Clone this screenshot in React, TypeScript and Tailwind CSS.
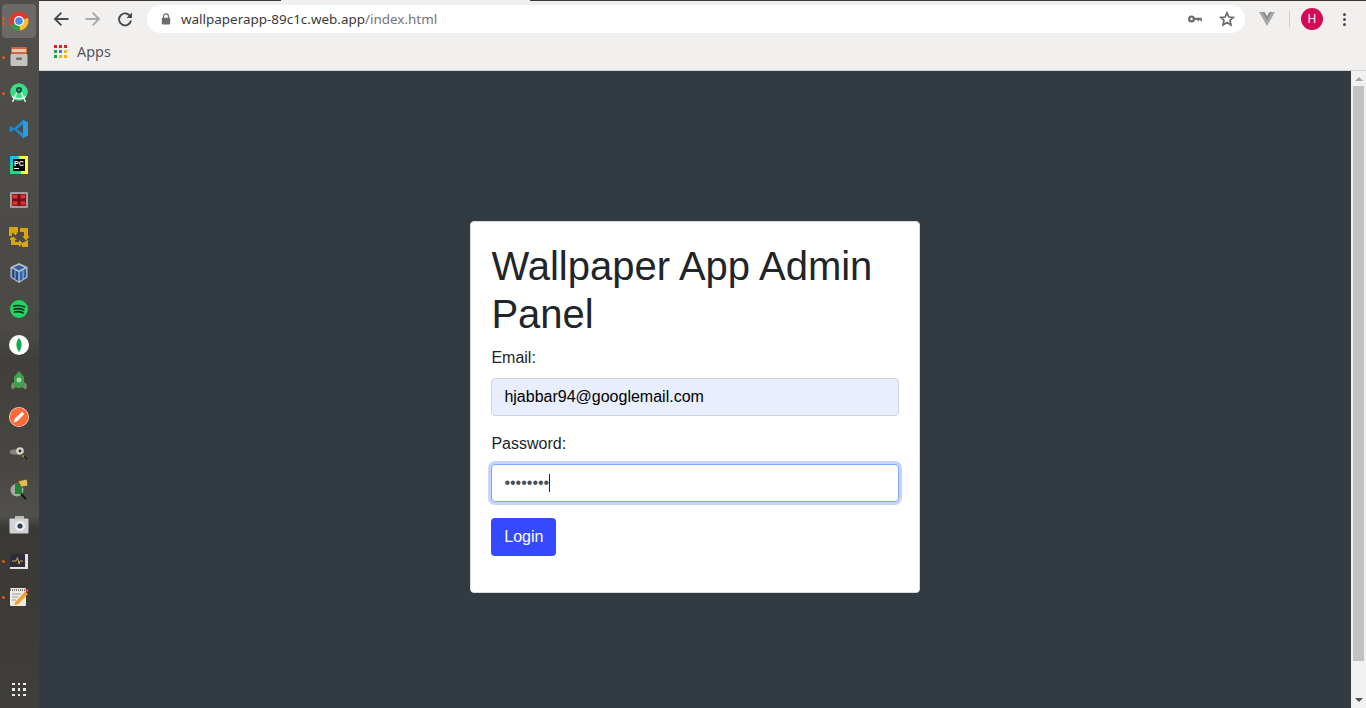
// App.tsx
import React from "react";

const Dock: React.FC<{ dots?: number; children: React.ReactNode; active?: boolean }> = ({ dots = 0, children, active }) => {
  return (
    <div className="relative flex h-[36px] w-[39px] items-center justify-center pr-[1px]">
      {active && <div className="absolute left-[2px] top-[1px] h-[34px] w-[34px] rounded-[4px] bg-[#6b6a67]" />}
      {dots > 0 && (
        <div className="absolute left-[2px] top-0 flex h-full flex-col justify-center gap-[2px]">
          {Array.from({ length: dots }).map((_, i) => (
            <span key={i} className="h-[3px] w-[3px] rounded-full bg-[#e9541f]" />
          ))}
        </div>
      )}
      <div className="relative h-[20px] w-[20px]">{children}</div>
    </div>
  );
};

const icon = "block h-[20px] w-[20px] overflow-visible";

const Sidebar = () => (
  <div className="flex h-[708px] w-[39px] shrink-0 flex-col bg-[linear-gradient(180deg,#4f4e4a_0px,#4a4946_330px,#403f3b_360px,#484743_470px,#51504d_515px,#3a3936_528px,#3f3e3b_708px)] pt-[3px]">
    <Dock dots={2} active>
      <svg viewBox="0 0 20 20" className={icon}>
        <circle cx="10" cy="10" r="9.5" fill="#e0392e" />
        <path d="M10 10 L1.8 14.8 A9.5 9.5 0 0 0 11 19.4 Z" fill="#2f9e47" />
        <path d="M10 10 L19 7 A9.5 9.5 0 0 1 11 19.4 Z" fill="#f7c32d" />
        <circle cx="10" cy="10" r="5" fill="#fff" />
        <circle cx="10" cy="10" r="3.8" fill="#4a8af0" />
      </svg>
    </Dock>
    <Dock dots={1}>
      <svg viewBox="0 0 20 20" className={icon}>
        <rect x="2" y="0" width="16" height="9" rx="1" fill="#c9674a" />
        <rect x="3" y="2" width="14" height="3" fill="#f2c9a0" />
        <rect x="1.5" y="7" width="17" height="12" rx="1.5" fill="#c4c3bf" />
        <rect x="7" y="10.5" width="6" height="2.5" rx="1" fill="#6e6d70" />
      </svg>
    </Dock>
    <Dock dots={1}>
      <svg viewBox="0 0 20 20" className={icon}>
        <circle cx="10" cy="9" r="8.8" fill="#3ddc84" />
        <path d="M3.5 19 L9 7 M16.5 19 L11 7 M3 13.5 Q10 18 17 13.5" stroke="#e8f3ec" strokeWidth="1.4" fill="none" />
        <circle cx="10" cy="7" r="3" fill="#0f4b3d" />
        <circle cx="10" cy="7" r="1" fill="#3ddc84" />
      </svg>
    </Dock>
    <Dock>
      <svg viewBox="0 0 20 20" className={icon}>
        <path d="M14 1 L19 3.4 V16.6 L14 19 L5 10.5 L2 13 L0.5 12 V8 L2 7 L5 9.5 Z" fill="#1f8ad2" />
        <path d="M14 5.5 L8 10 L14 14.5 Z" fill="#4a4946" />
        <path d="M14 1 L19 3.4 V16.6 L14 19 Z" fill="#2a9ce4" />
      </svg>
    </Dock>
    <Dock>
      <svg viewBox="0 0 20 20" className={icon}>
        <rect x="1" y="1" width="18" height="18" fill="#21d789" />
        <path d="M10 1 H19 V19 H12 Z" fill="#fcf84a" />
        <path d="M1 1 H8 L1 10 Z" fill="#07c3f2" />
        <rect x="4" y="4" width="12" height="12" fill="#000" />
        <text x="5" y="11" fontSize="7" fontWeight="700" fill="#fff" fontFamily="Liberation Sans, sans-serif">PC</text>
        <rect x="5" y="13" width="5" height="1" fill="#fff" />
      </svg>
    </Dock>
    <Dock>
      <svg viewBox="0 0 20 20" className={icon}>
        <rect x="1" y="1" width="18" height="16" rx="1" fill="#a09f9c" />
        <rect x="3" y="3" width="14" height="12" fill="#a3171d" />
        <path d="M10 3 V15 M3 9 H17" stroke="#4d1014" strokeWidth="1.2" />
        <rect x="4" y="4" width="4" height="3" fill="#d8343a" />
        <rect x="12" y="4" width="4" height="3" fill="#d8343a" />
        <rect x="4" y="10.5" width="4" height="3" fill="#d8343a" />
        <rect x="12" y="10.5" width="4" height="3" fill="#d8343a" />
      </svg>
    </Dock>
    <Dock>
      <svg viewBox="0 0 20 20" className={icon}>
        <path d="M0 0 H9 V5 L6.5 8.5 L4 6 H3 V9 H0 Z M11 1 H19 V9 L20.5 9.5 L17 13.5 L13.5 9.5 L15 9 V5 H11 Z M1 11 L4.5 9.5 L8 13 H6 V15 H10 V13 L14 16.5 L10 20 V18 H2 V13 H1 Z M13 16 L19 13 V20 H13 Z" fill="#dba30c" />
      </svg>
    </Dock>
    <Dock>
      <svg viewBox="0 0 20 20" className={icon}>
        <path d="M10 0 L18.5 4 V14.5 L10 20 L1.5 14.5 V4 Z" fill="#b9c0cb" />
        <path d="M2.8 5.5 L9.3 9 V18.2 L2.8 14 Z" fill="#1f4c8f" />
        <path d="M17.2 5.5 L10.7 9 V18.2 L17.2 14 Z" fill="#2f62ad" />
        <path d="M10 2 L15.8 4.6 L10 7.6 L4.2 4.6 Z" fill="#33639f" />
        <path d="M6 7.5 V16 M14 7.5 V16" stroke="#c9d0da" strokeWidth="0.8" />
      </svg>
    </Dock>
    <Dock>
      <svg viewBox="0 0 20 20" className={icon}>
        <circle cx="10" cy="10" r="9" fill="#1ed760" />
        <path d="M4.5 7.2 Q10 5.4 15.5 8 M5 10.2 Q10 8.8 14.8 11 M5.6 13 Q10 11.9 14 13.8" stroke="#14261a" strokeWidth="1.6" fill="none" strokeLinecap="round" />
      </svg>
    </Dock>
    <Dock>
      <svg viewBox="0 0 20 20" className={icon}>
        <circle cx="10" cy="10" r="10" fill="#fff" />
        <path d="M10 3 C13.5 7 13.5 12 10 17 C6.5 12 6.5 7 10 3 Z" fill="#13aa52" />
      </svg>
    </Dock>
    <Dock>
      <svg viewBox="0 0 20 20" className={icon}>
        <path d="M4 11 Q0.5 15 3.5 18.5 L7 16 Z M16 11 Q19.5 15 16.5 18.5 L13 16 Z" fill="#7d8a6c" />
        <path d="M10 0 L15 6 V13 L12 17 H8 L5 13 V6 Z" fill="#3fa34d" />
        <circle cx="10" cy="9" r="2.4" fill="#a5dbae" />
      </svg>
    </Dock>
    <Dock>
      <svg viewBox="0 0 20 20" className={icon}>
        <circle cx="10" cy="10" r="10" fill="#f3d9cc" />
        <circle cx="10" cy="10" r="9.2" fill="#ff6a3a" />
        <path d="M4.5 15.5 L6 11.5 L13 4.8 L15.2 7 L8.5 14 Z" fill="#fff" />
      </svg>
    </Dock>
    <Dock>
      <svg viewBox="0 0 20 20" className={icon}>
        <ellipse cx="6" cy="9" rx="5.5" ry="2.8" fill="#85847d" />
        <circle cx="11" cy="8" r="3.8" fill="#d6d3c9" />
        <circle cx="11" cy="8" r="1.4" fill="#2d2b28" />
        <path d="M13 11 L18 16" stroke="#201f1c" strokeWidth="1.6" />
        <circle cx="14" cy="13" r="1.2" fill="#b9802c" />
      </svg>
    </Dock>
    <Dock>
      <svg viewBox="0 0 20 20" className={icon}>
        <circle cx="8" cy="11" r="6.5" fill="#a9a8a3" />
        <rect x="6" y="5" width="7" height="10" fill="#1c8a33" />
        <path d="M9 2 L18 0 L19 7 L12 8 Z" fill="#e2bb5c" stroke="#5a4515" strokeWidth="0.8" />
        <path d="M12 15 L17 20" stroke="#151513" strokeWidth="2" />
      </svg>
    </Dock>
    <Dock>
      <svg viewBox="0 0 20 20" className={icon}>
        <rect x="0.5" y="3.5" width="19" height="15" rx="1" fill="#d3d3d6" />
        <rect x="6" y="1" width="9" height="3" fill="#bcbcbf" />
        <circle cx="11" cy="11" r="5" fill="#efeff0" />
        <circle cx="11" cy="11" r="2.6" fill="#33415f" />
      </svg>
    </Dock>
    <Dock dots={1}>
      <svg viewBox="0 0 20 20" className={icon}>
        <rect x="1" y="3" width="18" height="15" fill="#e2e2e2" />
        <rect x="1" y="3" width="15" height="13" rx="0.5" fill="#2e2c3c" />
        <path d="M3 10 H7 L8.5 6.5 L10 13 L11 10 H14" stroke="#d7b15a" strokeWidth="0.9" fill="none" />
      </svg>
    </Dock>
    <Dock dots={1}>
      <svg viewBox="0 0 20 20" className={icon}>
        <rect x="1" y="1" width="16" height="18" rx="1" fill="#ecebe7" />
        <path d="M1 3 H17" stroke="#77766f" strokeWidth="2" strokeDasharray="1 1" />
        <path d="M3 7 H12 M3 10 H9 M3 13 H7" stroke="#9a9994" strokeWidth="1" />
        <path d="M6 15.5 L16 4.5 L19 7 L9 17.5 L5.5 18 Z" fill="#f0a02c" />
        <circle cx="18" cy="3.5" r="1.6" fill="#e2394b" />
      </svg>
    </Dock>
    <div className="flex flex-1 items-end justify-center pb-[12px] pr-[1px]">
      <div className="grid grid-cols-3 gap-[3px]">
        {Array.from({ length: 9 }).map((_, i) => (
          <span key={i} className="h-[2.5px] w-[2.5px] bg-[#eeeeec]" />
        ))}
      </div>
    </div>
  </div>
);

const TopStrip = () => (
  <div className="flex h-[1px] bg-[#3a3833]">
    <div className="ml-[242px] w-[249px] bg-[#f1f0ee]" />
  </div>
);

const Toolbar = () => (
  <div className="flex h-[35px] items-center bg-[#f1f0ee] pt-[1px]">
    <div className="flex w-[108px] shrink-0 items-center pl-[14px]">
      <svg viewBox="0 0 16 16" className="h-[16px] w-[16px]" fill="none" stroke="#4a4a4c" strokeWidth="1.9">
        <path d="M15.5 8 H2 M8.4 1.6 L2 8 L8.4 14.4" />
      </svg>
      <svg viewBox="0 0 16 16" className="ml-[16px] h-[16px] w-[16px]" fill="none" stroke="#a9a9a9" strokeWidth="1.9">
        <path d="M0.5 8 H14 M7.6 1.6 L14 8 L7.6 14.4" />
      </svg>
      <svg viewBox="0 0 16 16" className="ml-[16px] h-[16px] w-[16px]" fill="none">
        <path d="M13.6 6 A6 6 0 1 0 14 9.4" stroke="#4a4a4c" strokeWidth="1.9" />
        <path d="M15 1.5 V7 H9.5 Z" fill="#4a4a4c" />
      </svg>
    </div>
    <div className="flex h-[28px] w-[1098px] shrink-0 items-center rounded-full bg-white pl-[14px] pr-[10px]">
      <svg viewBox="0 0 10 12" className="h-[12px] w-[10px]">
        <path d="M2.5 5 V3.4 A2.5 2.5 0 0 1 7.5 3.4 V5" stroke="#6d6d6f" strokeWidth="1.2" fill="none" />
        <rect x="0.8" y="4.8" width="8.4" height="6.6" rx="0.8" fill="#6d6d6f" />
      </svg>
      <span className="ml-[10px] text-[13.45px] text-[#3a3a3c] [font-family:'Noto_Sans',sans-serif]">
        wallpaperapp-89c1c.web.app<span className="text-[#747476]">/index.html</span>
      </span>
      <div className="ml-auto flex items-center">
        <svg viewBox="0 0 16 8" className="h-[8px] w-[14px]">
          <circle cx="4" cy="4" r="2.7" stroke="#6e6e70" strokeWidth="2.6" fill="none" />
          <path d="M7 2.6 H15.8 V6.6 H14.2 V5.2 H12.6 V6.6 H11 V5.2 H7 Z" fill="#6e6e70" />
        </svg>
        <svg viewBox="0 0 16 16" className="ml-[17px] h-[16px] w-[16px]" fill="none" stroke="#6a6a6c" strokeWidth="1.7">
          <path d="M8 1.8 L9.9 6 L14.4 6.4 L11 9.4 L12 13.9 L8 11.5 L4 13.9 L5 9.4 L1.6 6.4 L6.1 6 Z" />
        </svg>
      </div>
    </div>
    <svg viewBox="0 0 16 14" className="ml-[14px] h-[14px] w-[16px]">
      <path d="M0 0 H5.5 L8 4.5 L10.5 0 H16 L8 14 Z" fill="#a7a7a7" />
      <path d="M3.2 0 H5.5 L8 4.5 L10.5 0 H12.8 L8 8.4 Z" fill="#8c8c8c" />
    </svg>
    <div className="ml-[14px] h-[16px] w-px bg-[#cfcfcf]" />
    <div className="ml-[11px] flex h-[22px] w-[22px] items-center justify-center rounded-full bg-[#d50a54] text-[12px] text-white [font-family:'Noto_Sans',sans-serif]">
      H
    </div>
    <div className="ml-[20px] flex flex-col gap-[2px]">
      <span className="h-[3px] w-[3px] rounded-full bg-[#4a4a4c]" />
      <span className="h-[3px] w-[3px] rounded-full bg-[#4a4a4c]" />
      <span className="h-[3px] w-[3px] rounded-full bg-[#4a4a4c]" />
    </div>
  </div>
);

const Bookmarks = () => (
  <div className="flex h-[35px] items-center border-b border-[#d6d4d2] bg-[#f1f0ee] pb-[3px] pl-[15px]">
    <div className="grid grid-cols-3 gap-[2px]">
      {["#ea1c1c", "#ea1c1c", "#ea1c1c", "#1ba14a", "#3b78e7", "#f5b400", "#1ba14a", "#f5b400", "#f5b400"].map((c, i) => (
        <span key={i} className="h-[3px] w-[3px]" style={{ backgroundColor: c }} />
      ))}
    </div>
    <span className="ml-[10px] text-[14.4px] text-[#57575a] [font-family:'Noto_Sans',sans-serif]">Apps</span>
  </div>
);

const Scrollbar = () => (
  <div className="flex w-[15px] shrink-0 flex-col items-center bg-[#f1f1f1]">
    <div className="mt-[6px] h-0 w-0 border-x-[4px] border-b-[4px] border-x-transparent border-b-[#a3a3a3]" />
    <div className="mt-[5px] h-[575px] w-[11px] bg-[#c1c1c1]" />
    <div className="mt-[37px] h-0 w-0 border-x-[4px] border-t-[4px] border-x-transparent border-t-[#505050]" />
  </div>
);

const LoginCard = () => (
  <div className="w-[450px] rounded-[4px] border border-[#d9dadb] bg-white p-[20px] text-[#212529] [font-family:'Liberation_Sans',sans-serif]">
    <h1 className="mb-[8px] text-[40px] leading-[48px] font-normal">Wallpaper App Admin Panel</h1>
    <div className="mb-[16px]">
      <label className="mb-[8px] block text-[16px] leading-[24px]">Email:</label>
      <div className="flex h-[38px] items-center rounded-[4px] border border-[#ced4da] bg-[#e8eefe] px-[12px] text-[16px] text-black">
        hjabbar94@googlemail.com
      </div>
    </div>
    <div className="mb-[16px]">
      <label className="mb-[8px] block text-[16px] leading-[24px]">Password:</label>
      <div className="flex h-[38px] items-center rounded-[4px] border border-[#80a8ff] bg-white px-[12px] text-[16px] text-[#495057] shadow-[0_0_0_3px_rgba(0,60,255,0.22)]">
        <span>••••••••</span>
        <span className="h-[18px] w-px bg-[#212529]" />
      </div>
    </div>
    <div className="mb-[16px] flex h-[38px] w-[65px] items-center justify-center rounded-[4px] bg-[#3549ff] text-[16px] text-white">
      Login
    </div>
  </div>
);

const App: React.FC = () => {
  return (
    <div className="flex h-[708px] w-[1366px] overflow-hidden">
      <Sidebar />
      <div className="flex min-w-0 flex-1 flex-col">
        <TopStrip />
        <Toolbar />
        <Bookmarks />
        <div className="flex min-h-0 flex-1">
          <div className="flex flex-1 items-start justify-center bg-[#323a42] pl-[0.8px] pt-[150px]">
            <LoginCard />
          </div>
          <Scrollbar />
        </div>
      </div>
    </div>
  );
};

export default App;
